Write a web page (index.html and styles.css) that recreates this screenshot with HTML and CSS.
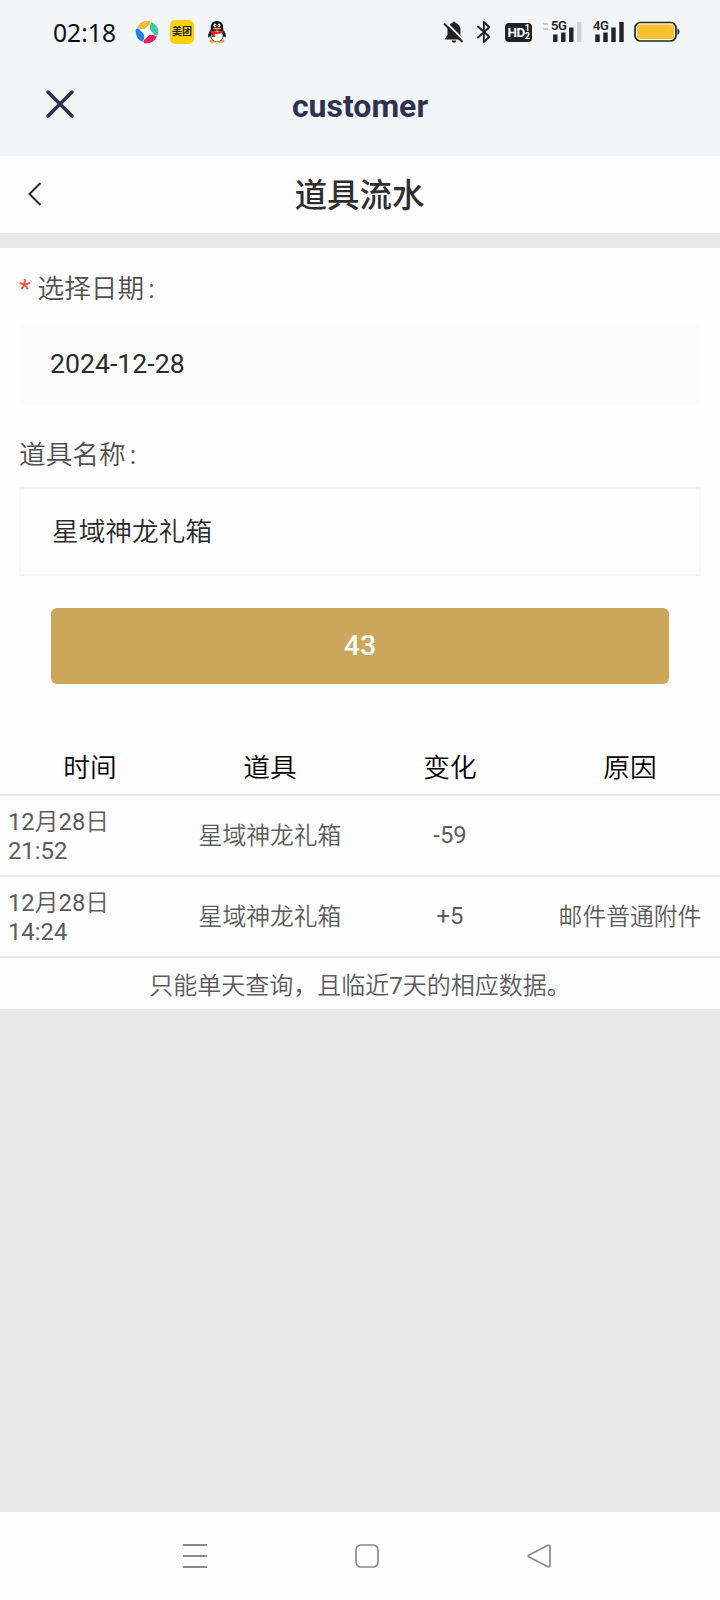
FILE: index.html
```html
<!DOCTYPE html>
<html lang="zh-CN">
<head>
    <meta charset="UTF-8">
    <meta name="viewport" content="width=device-width, initial-scale=1.0">
    <title>道具流水</title>
    <link rel="stylesheet" href="styles.css">
</head>
<body>
    <div class="status-bar">
        <span class="time">02:18</span>
        <svg class="app-icon" width="26" height="26" viewBox="0 0 26 26">
            <circle cx="13" cy="13" r="12.500" fill="#fff"/>
            <path d="M3 8.500 Q6 1.500 15 1.500 Q18 3 16 5.500 L10.500 10 Q7 11 3 8.500Z" fill="#eebd3c"/>
            <path d="M17.500 3 Q24.500 6 24.500 15 Q23 18 20.500 16 L16 10.500 Q15 7 17.500 3Z" fill="#3ccaa0"/>
            <path d="M23 17.500 Q20 24.500 11 24.500 Q8 23 10.500 20.500 L15.500 16 Q19 15 23 17.500Z" fill="#e61e64"/>
            <path d="M8.500 23 Q1.500 20 1.500 11 Q3 8 5.500 10.500 L10 15.500 Q11 19 8.500 23Z" fill="#2684e8"/>
        </svg>
        <span class="meituan">美团</span>
        <svg class="qq" width="20" height="24" viewBox="0 0 20 24">
            <ellipse cx="6.500" cy="21" rx="3.800" ry="1.800" fill="#f29a20"/>
            <ellipse cx="13.500" cy="21" rx="3.800" ry="1.800" fill="#f29a20"/>
            <path d="M10 1 C5 1 3.500 4.500 3.800 9.500 C2 12 .5 15 1.300 17.500 L3.300 16 C4 20 6.500 21.500 10 21.500 S16 20 16.700 16 L18.700 17.500 C19.500 15 18 12 16.200 9.500 C16.500 4.500 15 1 10 1Z" fill="#111"/>
            <ellipse cx="10" cy="16" rx="5.700" ry="5.500" fill="#fff"/>
            <ellipse cx="8" cy="5.300" rx="1.400" ry="1.900" fill="#fff"/>
            <ellipse cx="12" cy="5.300" rx="1.400" ry="1.900" fill="#fff"/>
            <circle cx="8.400" cy="5.500" r=".7" fill="#111"/>
            <circle cx="11.600" cy="5.500" r=".7" fill="#111"/>
            <ellipse cx="10" cy="8.600" rx="4" ry="1.200" fill="#f29a20"/>
            <path d="M3.800 10 Q10 13 16.200 10 L16.500 12.500 Q12 14.500 8 14 V17 H5 V13.300 L3.500 12.500Z" fill="#e02a2a"/>
        </svg>

        <div class="status-right">
            <svg width="22" height="24" viewBox="0 0 22 24">
                <path d="M11 1.500 a1.600 1.600 0 0 1 1.600 1.600 C16 4 17.500 6.500 17.500 10 V15 L20 18.500 V19.500 H2 V18.500 L4.500 15 V10 C4.500 6.500 6 4 9.400 3.100 A1.600 1.600 0 0 1 11 1.500Z" fill="#222"/>
                <path d="M8.700 20.500 H13.300 Q13 22.800 11 22.800 T8.700 20.500Z" fill="#222"/>
                <path d="M3 2.500 L21 20.500" stroke="#f2f6f9" stroke-width="2"/>
                <path d="M1 3.500 L19.500 22" stroke="#222" stroke-width="2"/>
            </svg>
            <svg class="bluetooth" width="16" height="24" viewBox="0 0 16 24">
                <path d="M2 6.500 L13.300 16.700 L7.800 22 V2 L13.300 7.300 L2 17.500" fill="none" stroke="#222" stroke-width="1.900" stroke-linejoin="round" stroke-linecap="round"/>
            </svg>
            <span class="hd">HD<span class="hd-sim"><i>1</i><i>2</i></span></span>
            <div class="signal signal-5g">
                <span class="net">5G</span>
                <svg width="40" height="24" viewBox="0 0 40 24">
                    <path d="M0 4 H5 M0 9 H5" stroke="#c9cccf" stroke-width="2.200"/>
                    <path d="M12.300 14.500 V22 M20.300 12.500 V22 M28.300 7.500 V22" stroke="#222" stroke-width="4.400"/>
                    <path d="M36.300 2 V22" stroke="#cfd2d5" stroke-width="4.400"/>
                </svg>
            </div>
            <div class="signal signal-4g">
                <span class="net">4G</span>
                <svg width="32" height="24" viewBox="0 0 32 24">
                    <path d="M4.500 14.500 V22 M12.500 12.500 V22 M20.500 7.500 V22 M28.500 2 V22" stroke="#222" stroke-width="4.400"/>
                </svg>
            </div>
            <svg width="46" height="22" viewBox="0 0 46 22">
                <rect x="1" y="1.500" width="41" height="18.500" rx="5.500" fill="#fffbe8" stroke="#2a2522" stroke-width="1.700"/>
                <rect x="3" y="3.500" width="37" height="14.500" rx="3.500" fill="#fbc02d"/>
                <path d="M43.500 7.500 Q45.500 8 45.500 10.800 T43.500 14Z" fill="#2a2522"/>
            </svg>
        </div>
    </div>

    <header class="app-header">
        <svg class="close" width="30" height="30" viewBox="0 0 30 30">
            <path d="M3 3 L27 27 M27 3 L3 27" stroke="#2f3150" stroke-width="3.400" stroke-linecap="round"/>
        </svg>
        <h1>customer</h1>
    </header>

    <div class="page-title">
        <svg class="back" width="16" height="26" viewBox="0 0 16 26">
            <path d="M13.500 2 L2.500 13 L13.500 24" fill="none" stroke="#2b2b2b" stroke-width="2"/>
        </svg>
        <h2>道具流水</h2>
    </div>

    <main class="container">
        <div class="form-group">
            <label for="date"><span class="required">*</span>选择日期<span class="colon">:</span></label>
            <input type="text" id="date" class="date-input" value="2024-12-28">
        </div>
        <div class="form-group">
            <label for="item">道具名称<span class="colon">:</span></label>
            <input type="text" id="item" class="item-input" value="星域神龙礼箱">
        </div>
        <button class="query-btn">43</button>

        <table class="records">
            <thead>
                <tr><th>时间</th><th>道具</th><th>变化</th><th>原因</th></tr>
            </thead>
            <tbody>
                <tr>
                    <td class="date"><b>12</b>月<b>28</b>日<br><b>21:52</b></td>
                    <td>星域神龙礼箱</td>
                    <td class="change">-59</td>
                    <td></td>
                </tr>
                <tr>
                    <td class="date"><b>12</b>月<b>28</b>日<br><b>14:24</b></td>
                    <td>星域神龙礼箱</td>
                    <td class="change">+5</td>
                    <td>邮件普通附件</td>
                </tr>
            </tbody>
        </table>
        <p class="tip">只能单天查询，且临近<b>7</b>天的相应数据。</p>
    </main>

    <nav class="nav-bar">
        <svg width="26" height="26" viewBox="0 0 26 26">
            <path d="M1 2 H25 M1 13 H25 M1 24 H25" stroke="#8a8a8a" stroke-width="2"/>
        </svg>
        <svg width="26" height="26" viewBox="0 0 26 26">
            <rect x="2" y="2" width="22" height="22" rx="5" fill="none" stroke="#8a8a8a" stroke-width="1.700"/>
        </svg>
        <svg width="26" height="26" viewBox="0 0 26 26">
            <path d="M21.500 2.500 L3 12 Q1.500 13 3 14 L21.500 23.500 Q24 24.300 24 22 V4 Q24 1.700 21.500 2.500Z" fill="none" stroke="#8a8a8a" stroke-width="1.700"/>
        </svg>
    </nav>
</body>
</html>
```
FILE: styles.css
```css
* {
    box-sizing: border-box;
}

body {
    font-family: Roboto, "Noto Sans CJK SC", sans-serif;
    margin: 0;
    background-color: #e8e8e8;
    display: flex;
    flex-direction: column;
    height: 1600px;
}

svg {
    display: block;
    flex: none;
}

.status-bar {
    background: #f2f6f9;
    height: 64px;
    padding: 0 40px 0 53px;
    display: flex;
    align-items: center;
}

.time {
    font-family: "Noto Sans", sans-serif;
    font-size: 24.7px;
    line-height: 64px;
    padding-top: 1px;
    color: #0c0c0c;
    width: 81px;
}

.app-icon {
    margin-right: 10px;
}

.meituan {
    width: 24px;
    height: 24px;
    border-radius: 5px;
    background: #fbd00c;
    color: #222;
    font-size: 10px;
    font-weight: 700;
    line-height: 24px;
    text-align: center;
    margin-right: 13px;
}

.status-right {
    margin-left: auto;
    display: flex;
    align-items: center;
}

.bluetooth {
    margin-left: 11px;
}

.hd {
    width: 27px;
    height: 19px;
    margin: 0 11px 0 13px;
    border-radius: 4px;
    background: #222;
    color: #fff;
    font-size: 13.5px;
    font-weight: 700;
    letter-spacing: -0.5px;
    line-height: 19px;
    display: flex;
    justify-content: center;
}

.hd-sim {
    display: flex;
    flex-direction: column;
    padding-top: 1px;
}

.hd-sim i {
    font-size: 9px;
    font-style: normal;
    line-height: 8px;
}

.signal {
    position: relative;
}

.signal-5g {
    margin-right: 10px;
}

.signal-4g {
    margin-right: 9px;
}

.net {
    position: absolute;
    top: 0;
    left: 8px;
    font-family: Roboto, sans-serif;
    font-size: 13px;
    font-weight: 600;
    letter-spacing: -0.5px;
    line-height: 12px;
    color: #222;
}

.signal-4g .net {
    left: 0;
}

.app-header {
    background: #f2f6f8;
    height: 92px;
    padding: 0 45px;
    display: grid;
    grid-template-columns: 30px 1fr 30px;
    align-items: center;
}

.close {
    margin-bottom: 12px;
}

.app-header h1 {
    margin: 0 0 9px;
    font-size: 32px;
    font-weight: 700;
    text-align: center;
    color: #2f3150;
}

.page-title {
    background: #fdfdfd;
    height: 77px;
    padding: 0 27px 2px;
    display: grid;
    grid-template-columns: 16px 1fr 16px;
    align-items: center;
}

.page-title h2 {
    margin: 0 1px 2px 0;
    font-size: 32.4px;
    font-weight: 500;
    text-align: center;
    color: #2e2e2e;
}

.container {
    background: #fdfdfd;
    margin-top: 15px;
    height: 761px;
    padding-top: 21px;
}

.form-group {
    padding: 0 19px;
}

.form-group label {
    display: block;
    height: 40px;
    font-size: 26.7px;
    font-weight: 350;
    line-height: 40px;
    color: #505050;
}

.required {
    color: #ee5550;
    font-weight: 400;
    margin-right: 7px;
}

.colon {
    margin-left: 4px;
    font-weight: 400;
}

.form-group input {
    display: block;
    width: 100%;
    font-family: inherit;
    font-size: 26.7px;
    color: #2b2b2b;
    outline: none;
}

.date-input {
    height: 82px;
    margin: 15px 0 29px;
    padding: 0 30px 2px;
    border: 1px solid #fcfcfc;
    background: #fbfbfb;
}

.item-input {
    height: 89px;
    margin-top: 12px;
    padding: 0 31px 4px;
    border: 2px solid #f5f5f5;
    background: #fdfdfd;
    font-weight: 350;
}

.query-btn {
    display: block;
    width: 618px;
    height: 76px;
    margin: 32px auto 0;
    padding: 0 0 2px;
    border: none;
    border-radius: 6px;
    background: #cba65b;
    color: #fff;
    font-family: inherit;
    font-size: 28.5px;
    font-weight: 500;
}

.records {
    width: 100%;
    margin-top: 55px;
    table-layout: fixed;
    border-collapse: separate;
    border-spacing: 0;
}

.records th {
    height: 57px;
    padding: 0 0 3px;
    border-bottom: 2px solid #e9e9e9;
    font-size: 26.7px;
    font-weight: 350;
    color: #000;
}

.records td {
    height: 81px;
    padding: 2px 0 0;
    border-bottom: 2px solid #e9e9e9;
    font-size: 23.8px;
    font-weight: 350;
    line-height: 29px;
    text-align: center;
    color: #5c5c5c;
}

.records td.date {
    padding-left: 8px;
    text-align: left;
}

.records td.change {
    padding-top: 0;
    font-weight: 400;
}

.records b,
.tip b {
    font-weight: 400;
}

.tip {
    margin: 0;
    font-size: 24px;
    font-weight: 350;
    line-height: 56px;
    text-align: center;
    color: #5c5c5c;
}

.nav-bar {
    background: #fdfdfd;
    height: 88px;
    margin-top: auto;
    padding: 0 168px 0 182px;
    display: flex;
    justify-content: space-between;
    align-items: center;
}
```
